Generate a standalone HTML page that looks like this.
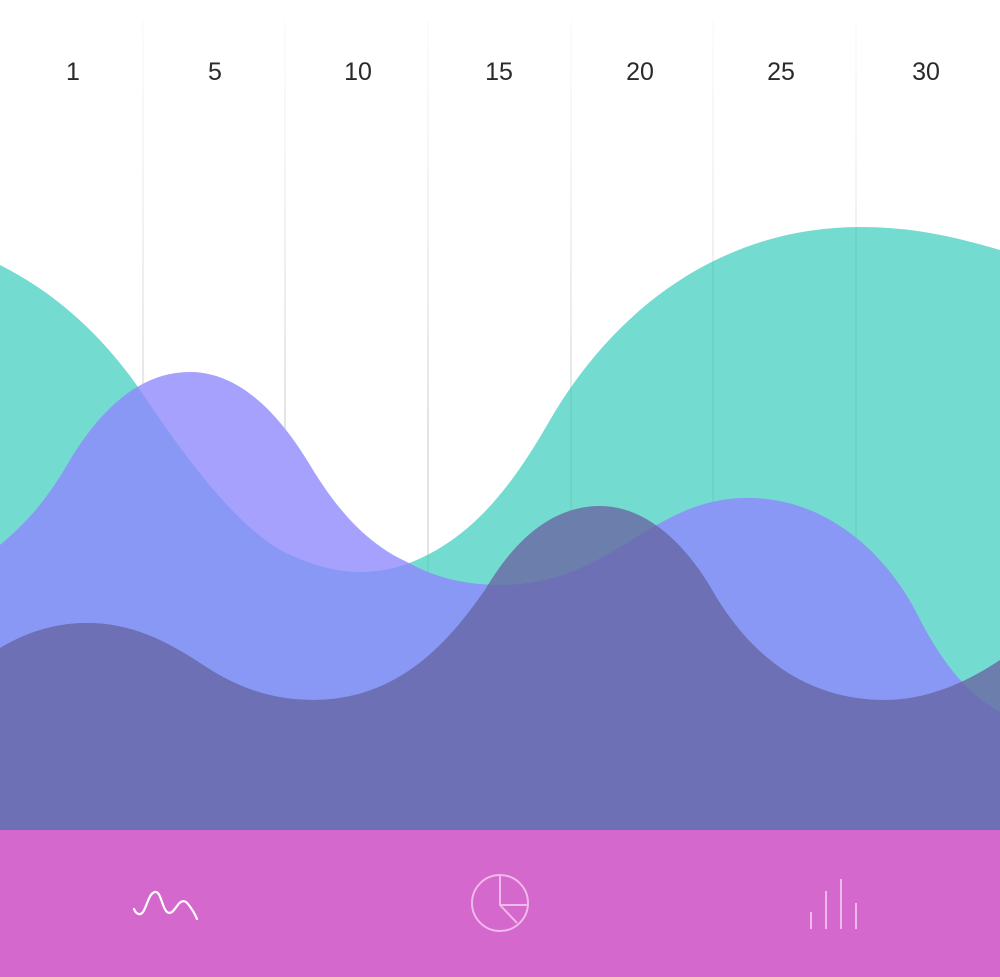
<!DOCTYPE html>
<html><head><meta charset="utf-8"><style>
html,body{margin:0;padding:0;background:#fff;}
body{width:1000px;height:977px;overflow:hidden;position:relative;font-family:"Liberation Sans",sans-serif;}
svg{position:absolute;left:0;top:0;}
.lbl{position:absolute;top:58px;font-size:25px;color:#2a2a2a;width:80px;text-align:center;margin-left:-40px;font-weight:normal;}
</style></head><body>
<svg width="1000" height="977" viewBox="0 0 1000 977">
<defs>
<linearGradient id="g" x1="0" y1="0" x2="0" y2="1">
<stop offset="0" stop-color="#eeeeee" stop-opacity="0.2"/>
<stop offset="0.5" stop-color="#e4e4e4" stop-opacity="1"/>
<stop offset="1" stop-color="#e4e4e4" stop-opacity="1"/>
</linearGradient>
<clipPath id="cT"><path d="M0,265 C60,295 105,340 138,387 C180,450 230,520 280,550 C310,565 335,572 360,572 C380,572 395,568 407,564 C470,540 510,490 550,420 C620,300 730,227 860,227 C920,227 965,240 1000,250 L1000,830 L0,830Z"/></clipPath>
<clipPath id="cL"><path d="M0,545 C30,520 50,495 70,460 C110,395 150,372 190,372 C240,372 280,415 310,465 C340,515 370,545 407,562 C430,575 460,585 500,585 C560,585 600,560 640,535 C680,510 710,498 748,498 C820,498 880,545 915,610 C935,650 960,690 1000,712 L1000,830 L0,830Z"/></clipPath>
</defs>
<g fill="url(#g)">
<rect x="142" y="20" width="2" height="810"/>
<rect x="284" y="20" width="2" height="810"/>
<rect x="427" y="20" width="2" height="810"/>
<rect x="570" y="20" width="2" height="810"/>
<rect x="712" y="20" width="2" height="810"/>
<rect x="855" y="20" width="2" height="810"/>
</g>
<path fill="#73dbcf" d="M0,265 C60,295 105,340 138,387 C180,450 230,520 280,550 C310,565 335,572 360,572 C380,572 395,568 407,564 C470,540 510,490 550,420 C620,300 730,227 860,227 C920,227 965,240 1000,250 L1000,830 L0,830Z"/>
<g fill="#000" fill-opacity="0.03" clip-path="url(#cT)">
<rect x="142" y="220" width="2" height="610"/>
<rect x="284" y="220" width="2" height="610"/>
<rect x="427" y="220" width="2" height="610"/>
<rect x="570" y="220" width="2" height="610"/>
<rect x="712" y="220" width="2" height="610"/>
<rect x="855" y="220" width="2" height="610"/>
</g>
<path fill="#a5a1fd" d="M0,545 C30,520 50,495 70,460 C110,395 150,372 190,372 C240,372 280,415 310,465 C340,515 370,545 407,562 C430,575 460,585 500,585 C560,585 600,560 640,535 C680,510 710,498 748,498 C820,498 880,545 915,610 C935,650 960,690 1000,712 L1000,830 L0,830Z"/>
<path clip-path="url(#cT)" fill="#8898f4" d="M0,545 C30,520 50,495 70,460 C110,395 150,372 190,372 C240,372 280,415 310,465 C340,515 370,545 407,562 C430,575 460,585 500,585 C560,585 600,560 640,535 C680,510 710,498 748,498 C820,498 880,545 915,610 C935,650 960,690 1000,712 L1000,830 L0,830Z"/>
<path clip-path="url(#cT)" fill="#6b7eac" d="M0,648 C30,630 60,623 87,623 C130,623 165,640 200,663 C240,690 275,700 313,700 C400,700 450,640 485,590 C520,530 560,506 600,506 C650,506 690,550 715,595 C760,670 820,700 885,700 C930,700 970,680 1000,660 L1000,830 L0,830Z"/>
<path clip-path="url(#cL)" fill="#6d70b5" d="M0,648 C30,630 60,623 87,623 C130,623 165,640 200,663 C240,690 275,700 313,700 C400,700 450,640 485,590 C520,530 560,506 600,506 C650,506 690,550 715,595 C760,670 820,700 885,700 C930,700 970,680 1000,660 L1000,830 L0,830Z"/>
<rect x="0" y="830" width="1000" height="147" fill="#d568cc"/>
<path d="M134,909 C136,914 140,916 143,912 C147,906 149,893 155,892 C161,891 162,908 167,912 C171,915 174,910 177,906 C181,900 185,900 188,904 C192,909 195,914 197,919" fill="none" stroke="#fff" stroke-width="2.2" stroke-linecap="round"/>
<g fill="none" stroke="#efb9ea" stroke-width="2">
<circle cx="500" cy="903" r="28"/>
<path d="M500,875 L500,905 L528,905 M500,905 L517,923"/>
</g>
<g stroke="#efb9ea" stroke-width="2">
<line x1="811" y1="912" x2="811" y2="929"/>
<line x1="826" y1="891" x2="826" y2="929"/>
<line x1="841" y1="879" x2="841" y2="929"/>
<line x1="856" y1="903" x2="856" y2="929"/>
</g>
</svg>
<div class="lbl" style="left:73px">1</div>
<div class="lbl" style="left:215px">5</div>
<div class="lbl" style="left:358px">10</div>
<div class="lbl" style="left:499px">15</div>
<div class="lbl" style="left:640px">20</div>
<div class="lbl" style="left:781px">25</div>
<div class="lbl" style="left:926px">30</div>
</body></html>
